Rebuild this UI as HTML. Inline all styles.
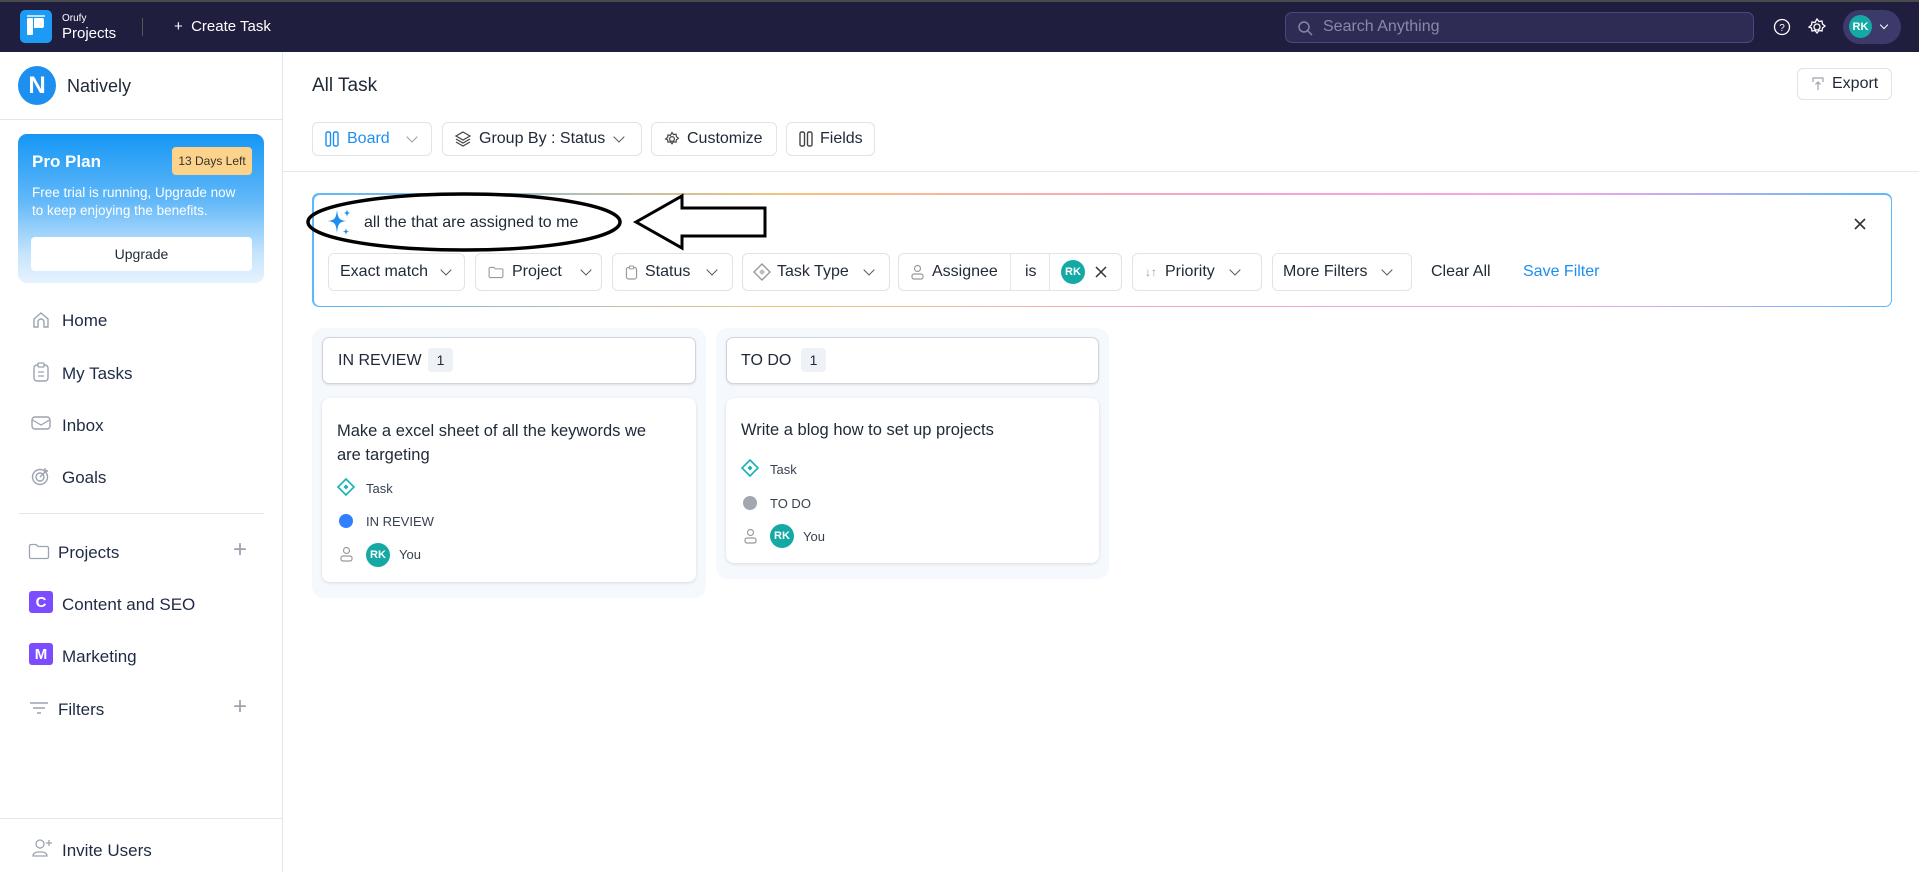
<!DOCTYPE html>
<html><head><meta charset="utf-8">
<style>
*{box-sizing:border-box;margin:0;padding:0}
body{width:1919px;height:872px;position:relative;overflow:hidden;background:#fff;font-family:"Liberation Sans",sans-serif;color:#1f2937}
.a{position:absolute}
.t{position:absolute;white-space:nowrap;line-height:1}
.btn{position:absolute;border:1px solid #dfe3ea;border-radius:6px;background:#fff;display:flex;align-items:center;font-size:16px;color:#1f2937;white-space:nowrap}
.chev{display:inline-block;width:8px;height:8px;border-right:1.5px solid #555;border-bottom:1.5px solid #555;transform:rotate(45deg);margin-top:-4px}
.nav{position:absolute;left:62px;font-size:17px;color:#1f2a44;white-space:nowrap;line-height:1}
svg{position:absolute}
.card{position:absolute;background:#fff;border-radius:8px;box-shadow:0 1px 3px rgba(0,0,0,.12)}
.rk{position:absolute;width:24px;height:24px;border-radius:50%;background:#14a9a4;color:#fff;font-size:11px;font-weight:bold;display:flex;align-items:center;justify-content:center}
.small{font-size:13px;color:#374151}
</style></head><body>
<!-- header -->
<div class="a" style="left:0;top:0;width:1919px;height:52px;background:#201e3e;border-top:2px solid #4a4a4a"></div>
<div class="a" style="left:20px;top:10px;width:32px;height:33px;background:#1d9bf4;border-radius:5px"></div>
<div class="a" style="left:27px;top:18px;width:6px;height:17px;background:#fff;border-radius:1px"></div>
<div class="a" style="left:34px;top:18px;width:10px;height:10px;background:#fff;border-radius:0 2px 2px 0"></div>
<div class="a" style="left:27px;top:15px;width:18px;height:2px;background:#bfe2fc"></div>
<div class="t" style="left:62px;top:14px;font-size:10px;color:#fff">Orufy</div>
<div class="t" style="left:62px;top:26px;font-size:15px;color:#fff">Projects</div>
<div class="a" style="left:142px;top:18px;width:1px;height:18px;background:#555"></div>
<div class="t" style="left:174px;top:19px;font-size:15px;color:#fff">+&nbsp; Create Task</div>
<div class="a" style="left:1285px;top:12px;width:469px;height:31px;background:#2e2c55;border:1px solid #4a4880;border-radius:7px"></div>
<svg style="left:1297px;top:20px" width="16" height="16" viewBox="0 0 16 16"><circle cx="7" cy="7" r="5" fill="none" stroke="#8a89a8" stroke-width="1.4"/><path d="M11 11l4 4" stroke="#8a89a8" stroke-width="1.4"/></svg>
<div class="t" style="left:1323px;top:19px;font-size:16px;color:#8a89a8">Search Anything</div>
<svg style="left:1773px;top:18px" width="18" height="18" viewBox="0 0 18 18"><circle cx="9" cy="9" r="7.5" fill="none" stroke="#fff" stroke-width="1.3"/><text x="9" y="13" font-size="10" fill="#fff" text-anchor="middle" font-family="Liberation Sans">?</text></svg>
<svg style="left:1807px;top:17px" width="20" height="20" viewBox="0 0 20 20"><path d="M10 2l2 2.5 3-.5.5 3 2.5 2-2.5 2-.5 3-3-.5-2 2.5-2-2.5-3 .5-.5-3L2 10l2.5-2 .5-3 3 .5z" fill="none" stroke="#fff" stroke-width="1.3"/><circle cx="10" cy="10" r="3" fill="none" stroke="#fff" stroke-width="1.3"/></svg>
<div class="a" style="left:1843px;top:10px;width:58px;height:34px;background:#3c3a6a;border-radius:17px"></div>
<div class="rk" style="left:1849px;top:15px;width:23px;height:23px;font-size:11px">RK</div>
<div class="a" style="left:1881px;top:22px;width:6px;height:6px;border-right:1.5px solid #fff;border-bottom:1.5px solid #fff;transform:rotate(45deg)"></div>

<!-- sidebar -->
<div class="a" style="left:282px;top:52px;width:1px;height:820px;background:#e2e5ea"></div>
<div class="a" style="left:18px;top:66px;width:38px;height:39px;border-radius:50%;background:#1d8ff0;color:#fff;font-weight:bold;font-size:24px;display:flex;align-items:center;justify-content:center">N</div>
<div class="t" style="left:67px;top:77px;font-size:18px;color:#1f2937">Natively</div>
<div class="a" style="left:0;top:119px;width:282px;height:1px;background:#e2e5ea"></div>
<div class="a" style="left:18px;top:134px;width:246px;height:149px;border-radius:9px;background:linear-gradient(#1597f5 0%,#62b8f8 45%,#c5e4fc 80%,#e6f3fe 100%)"></div>
<div class="t" style="left:32px;top:153px;font-size:17px;font-weight:bold;color:#fff">Pro Plan</div>
<div class="a" style="left:172px;top:147px;width:80px;height:28px;background:#fdd38b;border-radius:4px;font-size:12px;color:#333;display:flex;align-items:center;justify-content:center">13 Days Left</div>
<div class="t" style="left:32px;top:186px;font-size:13.5px;color:#fff">Free trial is running, Upgrade now</div>
<div class="t" style="left:32px;top:204px;font-size:13.5px;color:#fff">to keep enjoying the benefits.</div>
<div class="a" style="left:31px;top:237px;width:221px;height:34px;background:#fff;border-radius:4px;font-size:14px;color:#1f2937;display:flex;align-items:center;justify-content:center">Upgrade</div>

<svg style="left:31px;top:310px" width="20" height="20" viewBox="0 0 20 20"><path d="M3 9l7-6 7 6v8h-4v-5a3 3 0 0 0-6 0v5H3z" fill="none" stroke="#9ca3af" stroke-width="1.4"/></svg>
<div class="nav" style="top:312px">Home</div>
<svg style="left:32px;top:362px" width="18" height="20" viewBox="0 0 18 20"><rect x="2" y="3" width="14" height="16" rx="3" fill="none" stroke="#9ca3af" stroke-width="1.4"/><rect x="6" y="1" width="6" height="4" rx="1" fill="#fff" stroke="#9ca3af" stroke-width="1.3"/><path d="M6 10h6M6 14h6" stroke="#9ca3af" stroke-width="1.3"/></svg>
<div class="nav" style="top:365px">My Tasks</div>
<svg style="left:31px;top:415px" width="20" height="16" viewBox="0 0 20 16"><rect x="1" y="2" width="18" height="12" rx="3" fill="none" stroke="#9ca3af" stroke-width="1.4"/><path d="M1.5 5l8.5 5 8.5-5" fill="none" stroke="#9ca3af" stroke-width="1.3"/></svg>
<div class="nav" style="top:417px">Inbox</div>
<svg style="left:31px;top:466px" width="20" height="20" viewBox="0 0 20 20"><circle cx="9" cy="11" r="7.5" fill="none" stroke="#9ca3af" stroke-width="1.4"/><circle cx="9" cy="11" r="4" fill="none" stroke="#9ca3af" stroke-width="1.4"/><path d="M9 11l7-7M14 2v3h3" fill="none" stroke="#9ca3af" stroke-width="1.4"/></svg>
<div class="nav" style="top:469px">Goals</div>
<div class="a" style="left:19px;top:513px;width:245px;height:1px;background:#e2e5ea"></div>
<svg style="left:28px;top:543px" width="22" height="17" viewBox="0 0 22 17"><path d="M1.5 3a1.5 1.5 0 0 1 1.5-1.5h5l2 2h9a1.5 1.5 0 0 1 1.5 1.5v9a1.5 1.5 0 0 1-1.5 1.5H3A1.5 1.5 0 0 1 1.5 14z" fill="none" stroke="#9ca3af" stroke-width="1.3"/></svg>
<div class="nav" style="left:58px;top:544px">Projects</div>
<div class="t" style="left:233px;top:538px;font-size:24px;color:#9ca3af;font-weight:300">+</div>
<div class="a" style="left:29px;top:591px;width:24px;height:22px;background:#7c4dff;border-radius:3px;color:#fff;font-weight:bold;font-size:15px;display:flex;align-items:center;justify-content:center">C</div>
<div class="nav" style="top:596px">Content and SEO</div>
<div class="a" style="left:29px;top:643px;width:24px;height:22px;background:#7c4dff;border-radius:3px;color:#fff;font-weight:bold;font-size:15px;display:flex;align-items:center;justify-content:center">M</div>
<div class="nav" style="top:648px">Marketing</div>
<svg style="left:29px;top:701px" width="20" height="14" viewBox="0 0 20 14"><path d="M1 2h18M4 7h12M8 12h4" stroke="#9ca3af" stroke-width="1.4"/></svg>
<div class="nav" style="left:58px;top:701px">Filters</div>
<div class="t" style="left:233px;top:695px;font-size:24px;color:#9ca3af">+</div>
<div class="a" style="left:0;top:818px;width:282px;height:1px;background:#e2e5ea"></div>
<svg style="left:31px;top:838px" width="22" height="20" viewBox="0 0 22 20"><circle cx="9" cy="6" r="4" fill="none" stroke="#9ca3af" stroke-width="1.3"/><path d="M2 18a5 4 0 0 1 5-4h4a5 4 0 0 1 5 4z" fill="none" stroke="#9ca3af" stroke-width="1.3"/><path d="M15 5h6M18 2v6" stroke="#9ca3af" stroke-width="1.3"/></svg>
<div class="nav" style="top:842px">Invite Users</div>

<!-- main -->
<div class="t" style="left:312px;top:76px;font-size:19px;color:#1f2937">All Task</div>
<div class="btn" style="left:1797px;top:68px;width:95px;height:32px;padding-left:14px"><svg style="position:static;margin-right:8px" width="12" height="14" viewBox="0 0 12 14"><path d="M1 5V1h10v4" fill="none" stroke="#9ca3af" stroke-width="1.2"/><path d="M6 13V5M3.5 7.5L6 5l2.5 2.5" fill="none" stroke="#9ca3af" stroke-width="1.2"/></svg>Export</div>

<div class="btn" style="left:312px;top:122px;width:120px;height:34px;padding-left:12px;color:#1d8ff0"><svg style="position:static;margin-right:8px" width="14" height="16" viewBox="0 0 14 16"><rect x="1" y="1" width="4.5" height="14" rx="1.5" fill="none" stroke="#1d8ff0" stroke-width="1.4"/><rect x="8.5" y="1" width="4.5" height="14" rx="1.5" fill="none" stroke="#1d8ff0" stroke-width="1.4"/></svg>Board<span class="chev" style="margin-left:18px;border-color:#999"></span></div>
<div class="btn" style="left:442px;top:122px;width:200px;height:34px;padding-left:12px"><svg style="position:static;margin-right:8px" width="16" height="16" viewBox="0 0 16 16"><path d="M8 1l7 4-7 4-7-4z M1 8l7 4 7-4 M1 11l7 4 7-4" fill="none" stroke="#444" stroke-width="1.2"/></svg>Group By : Status<span class="chev" style="margin-left:10px"></span></div>
<div class="btn" style="left:651px;top:122px;width:126px;height:34px;padding-left:12px"><svg style="position:static;margin-right:7px" width="16" height="16" viewBox="0 0 20 20"><path d="M10 2l2 2.5 3-.5.5 3 2.5 2-2.5 2-.5 3-3-.5-2 2.5-2-2.5-3 .5-.5-3L2 10l2.5-2 .5-3 3 .5z" fill="none" stroke="#444" stroke-width="1.5"/><circle cx="10" cy="10" r="3" fill="none" stroke="#444" stroke-width="1.5"/></svg>Customize</div>
<div class="btn" style="left:786px;top:122px;width:89px;height:34px;padding-left:12px"><svg style="position:static;margin-right:7px" width="14" height="16" viewBox="0 0 14 16"><rect x="1" y="1" width="4.5" height="14" rx="1.5" fill="none" stroke="#444" stroke-width="1.4"/><rect x="8.5" y="1" width="4.5" height="14" rx="1.5" fill="none" stroke="#444" stroke-width="1.4"/></svg>Fields</div>
<div class="a" style="left:283px;top:171px;width:1636px;height:1px;background:#e5e7eb"></div>

<!-- AI filter box -->
<div class="a" style="left:312px;top:193px;width:1580px;height:114px;border-radius:7px;padding:1.5px;background:linear-gradient(90deg,#5cb8ff 0%,#f6c27a 30%,#f7a6c8 55%,#f0a8e8 80%,#5cb8ff 100%)"><div style="width:100%;height:100%;background:#fff;border-radius:6px"></div></div>
<svg style="left:327px;top:208px" width="26" height="30" viewBox="0 0 26 30"><path d="M10 2C11 10 12 12 19 13 12 14 11 16 10 25 9 16 8 14 1 13 8 12 9 10 10 2z" fill="#1d8ff0"/><path d="M20 1c.5 3 1 3.5 3 4-2 .5-2.5 1-3 4-.5-3-1-3.5-3-4 2-.5 2.5-1 3-4z" fill="#1d8ff0"/><path d="M19 20c.4 2.5.8 3 3 3.5-2.2.5-2.6 1-3 3.5-.4-2.5-.8-3-3-3.5 2.2-.5 2.6-1 3-3.5z" fill="#1d8ff0"/></svg>
<div class="t" style="left:364px;top:215px;font-size:16px;color:#1f2937">all the that are assigned to me</div>
<svg style="left:1853px;top:217px" width="14" height="14" viewBox="0 0 14 14"><path d="M2 2l10 10M12 2L2 12" stroke="#333" stroke-width="1.6"/></svg>

<div class="btn" style="left:328px;top:253px;width:137px;height:38px;padding-left:11px">Exact match<span class="chev" style="margin-left:14px"></span></div>
<div class="btn" style="left:475px;top:253px;width:127px;height:38px;padding-left:12px"><svg style="position:static;margin-right:8px" width="16" height="13" viewBox="0 0 22 17"><path d="M1.5 3a1.5 1.5 0 0 1 1.5-1.5h5l2 2h9a1.5 1.5 0 0 1 1.5 1.5v9a1.5 1.5 0 0 1-1.5 1.5H3A1.5 1.5 0 0 1 1.5 14z" fill="none" stroke="#999" stroke-width="1.5"/></svg>Project<span class="chev" style="margin-left:20px"></span></div>
<div class="btn" style="left:612px;top:253px;width:121px;height:38px;padding-left:12px"><svg style="position:static;margin-right:7px" width="13" height="17" viewBox="0 0 18 20"><rect x="2" y="3" width="14" height="16" rx="3" fill="none" stroke="#999" stroke-width="1.6"/><rect x="6" y="1" width="6" height="4" rx="1" fill="#fff" stroke="#999" stroke-width="1.5"/></svg>Status<span class="chev" style="margin-left:18px"></span></div>
<div class="btn" style="left:742px;top:253px;width:148px;height:38px;padding-left:10px"><svg style="position:static;margin-right:6px" width="18" height="18" viewBox="0 0 18 18"><path d="M9 1l8 8-8 8-8-8z" fill="none" stroke="#999" stroke-width="1.4"/><path d="M9 6l3 3-3 3-3-3z" fill="#bbb"/></svg>Task Type<span class="chev" style="margin-left:16px"></span></div>
<div class="btn" style="left:898px;top:253px;width:224px;height:38px;padding-left:12px"><svg style="position:static;margin-right:8px" width="13" height="16" viewBox="0 0 13 16"><circle cx="6.5" cy="4.5" r="3" fill="none" stroke="#999" stroke-width="1.2"/><rect x="1" y="10" width="11" height="5" rx="2" fill="none" stroke="#999" stroke-width="1.2"/></svg>Assignee<span style="position:absolute;left:111px;top:0;width:1px;height:36px;background:#e5e7eb"></span><span style="position:absolute;left:126px">is</span><span style="position:absolute;left:150px;top:0;width:1px;height:36px;background:#e5e7eb"></span><span class="rk" style="left:162px;top:6px">RK</span><svg style="left:196px;top:12px" width="12" height="12" viewBox="0 0 12 12"><path d="M1 1l10 10M11 1L1 11" stroke="#333" stroke-width="1.5"/></svg></div>
<div class="btn" style="left:1132px;top:253px;width:130px;height:38px;padding-left:12px"><span style="font-size:12px;color:#999;margin-right:8px">↓↑</span>Priority<span class="chev" style="margin-left:16px"></span></div>
<div class="btn" style="left:1272px;top:253px;width:140px;height:38px;padding-left:10px">More Filters<span class="chev" style="margin-left:16px"></span></div>
<div class="t" style="left:1431px;top:264px;font-size:16px;color:#1f2937">Clear All</div>
<div class="t" style="left:1523px;top:264px;font-size:16px;color:#1d8ff0">Save Filter</div>

<!-- annotation -->
<svg style="left:300px;top:188px" width="480" height="70" viewBox="0 0 480 70"><ellipse cx="164" cy="34" rx="156" ry="28" fill="none" stroke="#000" stroke-width="3.5"/><path d="M336 34L382 8V20H465V48H382V60Z" fill="#fff" stroke="#000" stroke-width="3"/></svg>

<!-- columns -->
<div class="a" style="left:312px;top:328px;width:394px;height:270px;background:#f5f8fd;border-radius:12px"></div>
<div class="a" style="left:322px;top:337px;width:374px;height:47px;background:#fff;border:1px solid #cfd4dd;border-radius:7px;box-shadow:0 1px 2px rgba(0,0,0,.1)"></div>
<div class="t" style="left:338px;top:353px;font-size:16px;color:#1f2937">IN REVIEW</div>
<div class="a" style="left:428px;top:348px;width:25px;height:24px;background:#eef1f6;border-radius:4px;font-size:14px;display:flex;align-items:center;justify-content:center">1</div>
<div class="card" style="left:322px;top:398px;width:374px;height:184px"></div>
<div class="t" style="left:337px;top:419px;font-size:16.5px;line-height:24px;white-space:normal;width:330px">Make a excel sheet of all the keywords we are targeting</div>
<svg style="left:337px;top:478px" width="18" height="18" viewBox="0 0 18 18"><path d="M9 1l8 8-8 8-8-8z" fill="none" stroke="#14b3b8" stroke-width="1.6"/><path d="M9 6.5l2.5 2.5L9 11.5 6.5 9z" fill="#14b3b8"/></svg>
<div class="t small" style="left:366px;top:482px">Task</div>
<div class="a" style="left:339px;top:514px;width:14px;height:14px;border-radius:50%;background:#2f80ff"></div>
<div class="t small" style="left:366px;top:515px">IN REVIEW</div>
<svg style="left:340px;top:546px" width="13" height="16" viewBox="0 0 13 16"><circle cx="6.5" cy="4.5" r="3" fill="none" stroke="#999" stroke-width="1.2"/><rect x="1" y="10" width="11" height="5" rx="2" fill="none" stroke="#999" stroke-width="1.2"/></svg>
<div class="rk" style="left:366px;top:543px">RK</div>
<div class="t small" style="left:399px;top:548px">You</div>

<div class="a" style="left:716px;top:328px;width:393px;height:251px;background:#f5f8fd;border-radius:12px"></div>
<div class="a" style="left:726px;top:337px;width:373px;height:47px;background:#fff;border:1px solid #cfd4dd;border-radius:7px;box-shadow:0 1px 2px rgba(0,0,0,.1)"></div>
<div class="t" style="left:741px;top:353px;font-size:16px;color:#1f2937">TO DO</div>
<div class="a" style="left:801px;top:348px;width:25px;height:24px;background:#eef1f6;border-radius:4px;font-size:14px;display:flex;align-items:center;justify-content:center">1</div>
<div class="card" style="left:726px;top:398px;width:373px;height:165px"></div>
<div class="t" style="left:741px;top:418px;font-size:16.5px;line-height:24px">Write a blog how to set up projects</div>
<svg style="left:741px;top:459px" width="18" height="18" viewBox="0 0 18 18"><path d="M9 1l8 8-8 8-8-8z" fill="none" stroke="#14b3b8" stroke-width="1.6"/><path d="M9 6.5l2.5 2.5L9 11.5 6.5 9z" fill="#14b3b8"/></svg>
<div class="t small" style="left:770px;top:463px">Task</div>
<div class="a" style="left:743px;top:496px;width:14px;height:14px;border-radius:50%;background:#a3a7b0"></div>
<div class="t small" style="left:770px;top:497px">TO DO</div>
<svg style="left:744px;top:528px" width="13" height="16" viewBox="0 0 13 16"><circle cx="6.5" cy="4.5" r="3" fill="none" stroke="#999" stroke-width="1.2"/><rect x="1" y="10" width="11" height="5" rx="2" fill="none" stroke="#999" stroke-width="1.2"/></svg>
<div class="rk" style="left:770px;top:524px">RK</div>
<div class="t small" style="left:803px;top:530px">You</div>
</body></html>
